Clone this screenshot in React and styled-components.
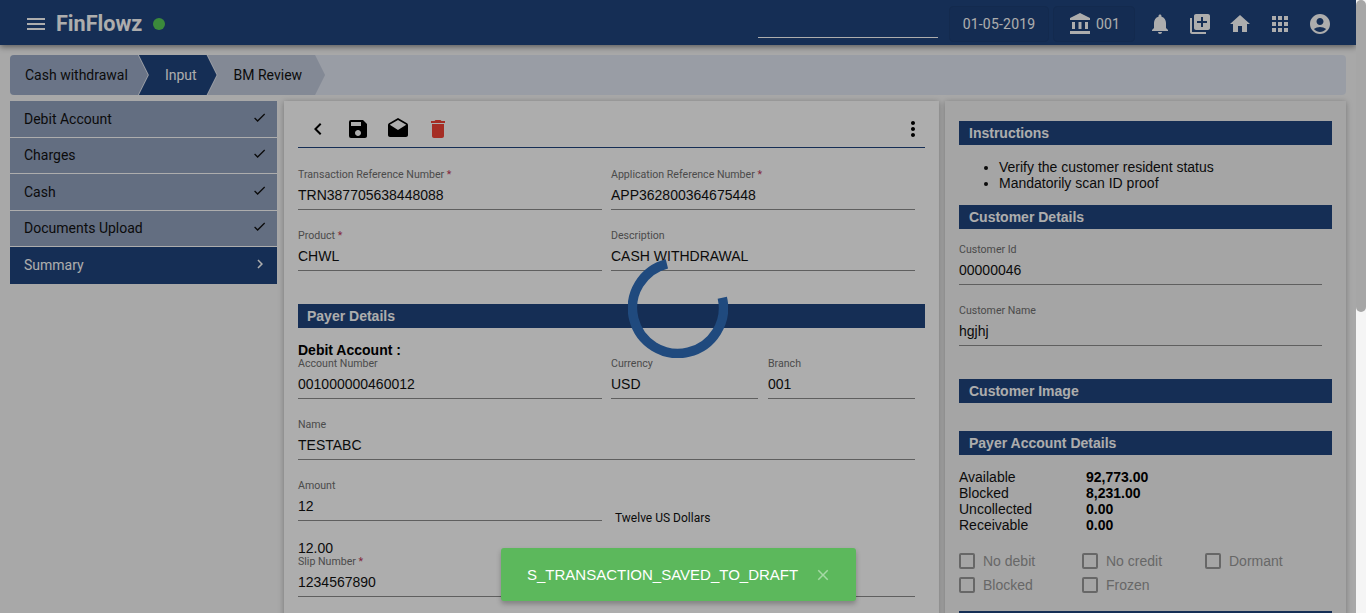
import React from "react";
import styled, { createGlobalStyle } from "styled-components";
import {
  MdMenu,
  MdAccountBalance,
  MdNotifications,
  MdLibraryAdd,
  MdHome,
  MdApps,
  MdAccountCircle,
  MdCheck,
  MdChevronLeft,
  MdChevronRight,
  MdSave,
  MdDrafts,
  MdDelete,
  MdMoreVert,
  MdClose,
} from "react-icons/md";

const NAVY = "#20457e";
const ARIAL = `"Liberation Sans", Arial, sans-serif`;

const GlobalStyle = createGlobalStyle`
  html, body {
    margin: 0;
    padding: 0;
    overflow: hidden;
    background: #f5f5f5;
  }
  * {
    box-sizing: border-box;
  }
`;

const Shell = styled.div`
  display: flex;
  width: 1366px;
  height: 613px;
  overflow: hidden;
  font-family: Roboto, "Liberation Sans", sans-serif;
`;
const Page = styled.div`
  position: relative;
  width: 1356px;
  height: 613px;
  overflow: hidden;
  background: #f8f8f8;
`;
const Track = styled.div`
  width: 10px;
  background: #f5f5f5;
`;
const Thumb = styled.div`
  height: 312px;
  border-radius: 5px;
  background: #a6a6a6;
`;
const Overlay = styled.div`
  position: absolute;
  inset: 0;
  z-index: 10;
  background: rgba(0, 0, 0, 0.32);
`;
const Spinner = styled.svg`
  position: absolute;
  z-index: 20;
  left: 628px;
  top: 258px;
`;
const Toast = styled.div`
  position: absolute;
  z-index: 20;
  left: 501px;
  top: 548px;
  width: 355px;
  height: 53px;
  display: flex;
  align-items: center;
  padding: 0 24px 0 26px;
  justify-content: space-between;
  border-radius: 3px;
  background: #5cb85c;
  color: #fff;
  font-family: ${ARIAL};
  font-size: 15px;
  box-shadow: 0 3px 5px rgba(0, 0, 0, 0.25);
  svg {
    color: #a5d9a5;
  }
`;

const Header = styled.header`
  position: relative;
  z-index: 2;
  display: flex;
  align-items: center;
  height: 45px;
  padding: 2px 24px 0 24px;
  background: ${NAVY};
  color: #fff;
  box-shadow: 0 2px 6px rgba(0, 0, 0, 0.45);
`;
const Brand = styled.div`
  margin-left: 8px;
  font-size: 21.6px;
  font-weight: 700;
`;
const Dot = styled.span`
  width: 12px;
  height: 12px;
  margin-left: 11px;
  border-radius: 50%;
  background: #58cc58;
`;
const Search = styled.div`
  width: 180px;
  height: 29px;
  margin-left: auto;
  border-bottom: 1px solid #fff;
`;
const InfoBox = styled.div`
  display: flex;
  align-items: center;
  justify-content: center;
  gap: 4px;
  height: 36px;
  margin-left: ${(p) => p.$gap}px;
  width: ${(p) => p.$width}px;
  border: 1px solid #1c3e73;
  border-radius: 4px;
  background: #1e4179;
  font-size: 14px;
  letter-spacing: 0.2px;
`;
const HeaderIcons = styled.div`
  display: flex;
  gap: 16px;
  margin-left: 13px;
  svg {
    display: block;
  }
`;

const Crumbs = styled.nav`
  display: flex;
  height: 40px;
  margin: 10px 10px 6px;
  border-radius: 4px;
  background: #e2e8f4;
  overflow: hidden;
`;
const Step = styled.div`
  display: flex;
  align-items: center;
  height: 40px;
  font-size: 14px;
  padding: 0 ${(p) => (p.$last ? 23 : 20)}px 0 ${(p) => (p.$first ? 15 : 26)}px;
  margin-left: ${(p) => (p.$first ? 0 : -9)}px;
  color: ${(p) => (p.$active ? "#fff" : "#111")};
  background: ${(p) => (p.$active ? NAVY : p.$first ? "#9dacc8" : "#c2cbdc")};
  clip-path: ${(p) =>
    p.$first
      ? "polygon(0 0, calc(100% - 10px) 0, 100% 50%, calc(100% - 10px) 100%, 0 100%)"
      : "polygon(0 0, calc(100% - 10px) 0, 100% 50%, calc(100% - 10px) 100%, 0 100%, 10px 50%)"};
`;

const Columns = styled.main`
  display: flex;
  align-items: flex-start;
  padding: 0 10px;
`;
const SideNav = styled.ul`
  width: 267px;
  margin: 0 7px 0 0;
  padding: 0;
  list-style: none;
`;
const NavItem = styled.li`
  display: flex;
  align-items: center;
  justify-content: space-between;
  height: ${(p) => (p.$active ? 37 : 36.5)}px;
  padding: 0 ${(p) => (p.$active ? 8 : 10)}px ${(p) => (p.$active ? 1 : 0)}px 14px;
  font-size: 14px;
  color: ${(p) => (p.$active ? "#fff" : "#111")};
  background: ${(p) => (p.$active ? NAVY : "#92a2bf")};
  border-bottom: ${(p) => (p.$active ? "none" : "1px solid #fff")};
  svg {
    margin-top: -3px;
  }
`;
const Card = styled.section`
  flex: none;
  width: ${(p) => p.$width}px;
  height: 900px;
  margin-right: 6px;
  padding: ${(p) => p.$pad};
  background: ${(p) => p.$bg};
  box-shadow: 0 1px 6px rgba(0, 0, 0, 0.3);
  &:last-child {
    margin-right: 0;
  }
`;
const Toolbar = styled.div`
  display: flex;
  align-items: center;
  height: 47px;
  padding: 10px 0 0 8px;
  gap: 16px;
  border-bottom: 1px solid ${NAVY};
  svg {
    display: block;
  }
`;
const ToolButton = styled.span`
  color: ${(p) => p.$color || "#000"};
  margin-left: ${(p) => (p.$push ? "auto" : "0")};
`;
const Row = styled.div`
  display: grid;
  grid-template-columns: ${(p) => p.$cols};
  column-gap: 9px;
  margin-top: ${(p) => (p.$top === undefined ? 18 : p.$top)}px;
`;
const Field = styled.div`
  margin-left: ${(p) => p.$nudge || 0}px;
  border-bottom: 1px solid #8c8c8c;
  padding-bottom: 4px;
`;
const Label = styled.div`
  padding-top: 1px;
  font-size: 10.6px;
  line-height: 14px;
  color: #6f6f6f;
  span {
    color: #c2395a;
  }
`;
const Value = styled.div`
  margin-top: 3px;
  font-family: ${ARIAL};
  font-size: 14px;
  line-height: 20px;
  color: #111;
`;
const Bar = styled.h3`
  margin: ${(p) => p.$top || 0}px 0 0;
  height: 24px;
  padding-left: ${(p) => p.$indent || 10}px;
  font-family: ${ARIAL};
  font-size: 14px;
  font-weight: 700;
  line-height: 24px;
  color: #fff;
  background: ${NAVY};
`;
const SubTitle = styled.div`
  margin-top: 14px;
  font-family: ${ARIAL};
  font-size: 14px;
  font-weight: 700;
  line-height: 16px;
  color: #000;
`;
const Words = styled.div`
  height: 43px;
  padding: 33px 0 0 4px;
  font-size: 12px;
  line-height: 14px;
  color: #111;
`;
const PlainLine = styled.div`
  margin-top: 19px;
  font-family: ${ARIAL};
  font-size: 14px;
  line-height: 16px;
  color: #111;
`;
const Notes = styled.ul`
  margin: 14px 0 14px;
  padding-left: 40px;
  font-family: ${ARIAL};
  font-size: 14px;
  line-height: 16px;
  color: #111;
`;
const Balances = styled.dl`
  display: grid;
  grid-template-columns: 127px 1fr;
  margin: 14px 0 16px;
  font-family: ${ARIAL};
  font-size: 14px;
  line-height: 16px;
  color: #111;
  dt,
  dd {
    margin: 0;
  }
  dd {
    font-weight: 700;
    color: #000;
  }
`;
const Flags = styled.div`
  display: grid;
  grid-template-columns: repeat(3, 123px);
  grid-auto-rows: 24px;
  margin-bottom: 14px;
`;
const Flag = styled.label`
  display: flex;
  align-items: center;
  gap: 8px;
  font-family: ${ARIAL};
  font-size: 14px;
  color: #999;
  i {
    width: 16px;
    height: 16px;
    border: 2px solid #999;
    border-radius: 2px;
  }
`;

const steps = ["Cash withdrawal", "Input", "BM Review"];
const navItems = ["Debit Account", "Charges", "Cash", "Documents Upload"];
const balances = [
  ["Available", "92,773.00"],
  ["Blocked", "8,231.00"],
  ["Uncollected", "0.00"],
  ["Receivable", "0.00"],
];
const flags = ["No debit", "No credit", "Dormant", "Blocked", "Frozen"];

const TextField = ({ label, value, required, nudge }) => (
  <Field $nudge={nudge}>
    <Label>
      {label}
      {required && <span> *</span>}
    </Label>
    <Value>{value}</Value>
  </Field>
);

export default function App() {
  return (
    <Shell>
      <GlobalStyle />
      <Page>
        <Header>
          <MdMenu size={24} />
          <Brand>FinFlowz</Brand>
          <Dot />
          <Search />
          <InfoBox $width={100} $gap={11}>
            01-05-2019
          </InfoBox>
          <InfoBox $width={82} $gap={4}>
            <MdAccountBalance size={24} />
            001
          </InfoBox>
          <HeaderIcons>
            <MdNotifications size={24} />
            <MdLibraryAdd size={24} />
            <MdHome size={24} />
            <MdApps size={24} />
            <MdAccountCircle size={24} />
          </HeaderIcons>
        </Header>

        <Crumbs>
          {steps.map((step, i) => (
            <Step key={step} $first={i === 0} $active={i === 1} $last={i === 2}>
              {step}
            </Step>
          ))}
        </Crumbs>

        <Columns>
          <SideNav>
            {navItems.map((item) => (
              <NavItem key={item}>
                {item}
                <MdCheck size={15} />
              </NavItem>
            ))}
            <NavItem $active>
              Summary
              <MdChevronRight size={18} />
            </NavItem>
          </SideNav>

          <Card $width={655} $pad="0 14px" $bg="#fff">
            <Toolbar>
              <ToolButton>
                <MdChevronLeft size={24} />
              </ToolButton>
              <ToolButton>
                <MdSave size={24} />
              </ToolButton>
              <ToolButton>
                <MdDrafts size={24} />
              </ToolButton>
              <ToolButton $color="#f44336">
                <MdDelete size={24} />
              </ToolButton>
              <ToolButton $push>
                <MdMoreVert size={24} />
              </ToolButton>
            </Toolbar>
            <Row $cols="304px 304px" $top={19}>
              <TextField label="Transaction Reference Number" value="TRN387705638448088" required />
              <TextField label="Application Reference Number" value="APP362800364675448" required />
            </Row>
            <Row $cols="304px 304px">
              <TextField label="Product" value="CHWL" required />
              <TextField label="Description" value="CASH WITHDRAWAL" />
            </Row>
            <Bar $top={33} $indent={9}>
              Payer Details
            </Bar>
            <SubTitle>Debit Account :</SubTitle>
            <Row $cols="304px 147px 148px" $top={-2}>
              <TextField label="Account Number" value="001000000460012" />
              <TextField label="Currency" value="USD" />
              <TextField label="Branch" value="001" nudge={1} />
            </Row>
            <Row $cols="617px">
              <TextField label="Name" value="TESTABC" />
            </Row>
            <Row $cols="304px 304px">
              <TextField label="Amount" value="12" />
              <Words>Twelve US Dollars</Words>
            </Row>
            <PlainLine>12.00</PlainLine>
            <Row $cols="617px" $top={-2}>
              <TextField label="Slip Number" value="1234567890" required />
            </Row>
          </Card>

          <Card $width={401} $pad="20px 14px 0" $bg="#f3f3f3">
            <Bar>Instructions</Bar>
            <Notes>
              <li>Verify the customer resident status</li>
              <li>Mandatorily scan ID proof</li>
            </Notes>
            <Bar>Customer Details</Bar>
            <Row $cols="363px" $top={13}>
              <TextField label="Customer Id" value="00000046" />
            </Row>
            <Row $cols="363px">
              <TextField label="Customer Name" value="hgjhj" />
            </Row>
            <Bar $top={33}>Customer Image</Bar>
            <Bar $top={28}>Payer Account Details</Bar>
            <Balances>
              {balances.map(([name, amount]) => (
                <React.Fragment key={name}>
                  <dt>{name}</dt>
                  <dd>{amount}</dd>
                </React.Fragment>
              ))}
            </Balances>
            <Flags>
              {flags.map((flag) => (
                <Flag key={flag}>
                  <i />
                  {flag}
                </Flag>
              ))}
            </Flags>
            <Bar />
          </Card>
        </Columns>

        <Overlay />
        <Spinner width="100" height="100" viewBox="0 0 100 100">
          <path
            d="M 38.9 5.8 A 45.5 45.5 0 1 0 94.3 39.8"
            fill="none"
            stroke="#204a7e"
            strokeWidth="9.5"
          />
        </Spinner>
        <Toast>
          S_TRANSACTION_SAVED_TO_DRAFT
          <MdClose size={18} />
        </Toast>
      </Page>
      <Track>
        <Thumb />
      </Track>
    </Shell>
  );
}
